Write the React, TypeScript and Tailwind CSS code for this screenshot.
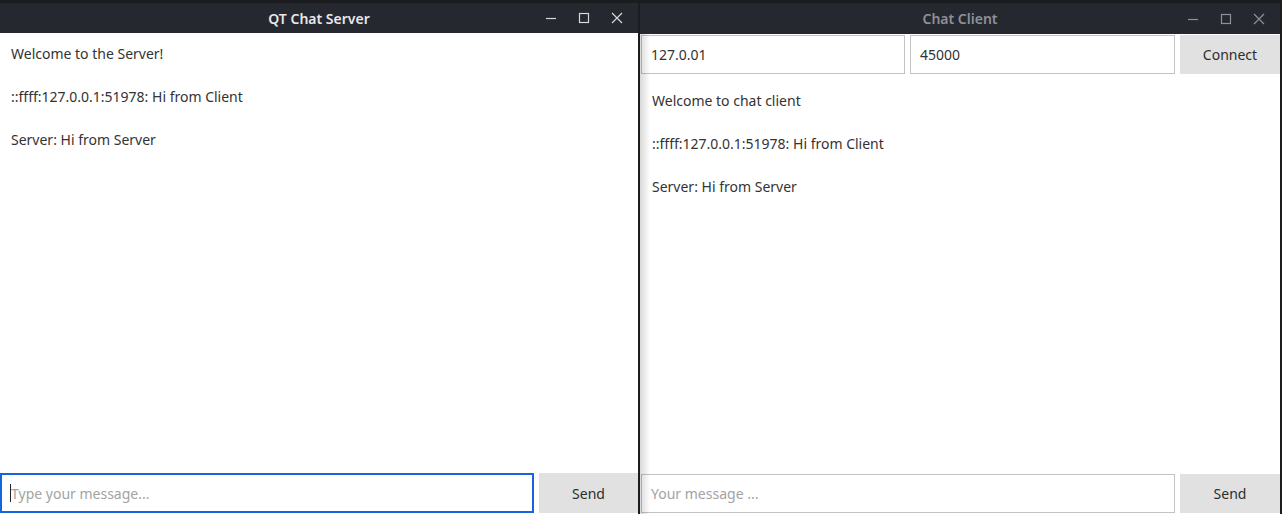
import React from "react";

const font = { fontFamily: '"Noto Sans", "Open Sans", sans-serif' };

function Controls({ dim }: { dim?: boolean }) {
  const c = dim ? "#8d9097" : "#d6d7da";
  return (
    <div className="flex items-center gap-[19px] pr-[14px]">
      <svg width="14" height="14" viewBox="0 0 14 14">
        <line x1="2" y1="7.5" x2="12" y2="7.5" stroke={c} strokeWidth="1.2" />
      </svg>
      <svg width="14" height="14" viewBox="0 0 14 14">
        <rect x="2.5" y="2.5" width="9" height="9" fill="none" stroke={c} strokeWidth="1.2" />
      </svg>
      <svg width="14" height="14" viewBox="0 0 14 14">
        <path d="M2 2 L12 12 M12 2 L2 12" stroke={c} strokeWidth="1.2" />
      </svg>
    </div>
  );
}

function TitleBar({ title, dim, h }: { title: string; dim?: boolean; h: string }) {
  return (
    <div className={`relative flex items-center justify-end bg-[#262830] ${h}`}>
      <div
        className={`absolute inset-0 flex items-center justify-center text-[14px] font-semibold ${
          dim ? "text-[#8d9097]" : "text-[#e6e7ea]"
        }`}
      >
        {title}
      </div>
      <div className="relative">
        <Controls dim={dim} />
      </div>
    </div>
  );
}

export default function App() {
  return (
    <div
      className="w-[1282px] h-[514px] bg-[#1b1c20] pt-[3px] flex overflow-hidden text-[14px] text-[#333333]"
      style={font}
    >
      {/* Server window */}
      <div className="w-[638px] flex flex-col">
        <TitleBar title="QT Chat Server" h="h-[30px]" />
        <div className="flex-1 bg-white flex flex-col">
          <div className="flex-1 flex flex-col gap-[23px] pt-[11px] pl-[11px] leading-[20px]">
            <div>Welcome to the Server!</div>
            <div>::ffff:127.0.0.1:51978: Hi from Client</div>
            <div>Server: Hi from Server</div>
          </div>
          <div className="flex gap-[5px] h-[41px] pb-[1px]">
            <div className="w-[534px] border-2 border-[#1565e0] flex items-center pl-[8px]">
              <div className="w-[1px] h-[18px] bg-[#222]" />
              <span className="text-[#a3a3a3] ml-0">Type your message...</span>
            </div>
            <div className="flex-1 bg-[#e1e1e1] flex items-center justify-center text-[#2d2d2d]">
              Send
            </div>
          </div>
        </div>
      </div>

      {/* Client window */}
      <div className="ml-[2px] w-[640px] flex flex-col">
        <TitleBar title="Chat Client" dim h="h-[31px]" />
        <div className="relative flex-1 bg-white flex flex-col">
          <div className="flex gap-[5px] mt-[1px] h-[39px] pl-[1px]">
            <div className="w-[264px] border border-[#c3c3c3] flex items-center pl-[9px]">127.0.01</div>
            <div className="w-[265px] border border-[#c3c3c3] flex items-center pl-[9px]">45000</div>
            <div className="flex-1 bg-[#e1e1e1] flex items-center justify-center text-[#2d2d2d]">
              Connect
            </div>
          </div>
          <div className="flex-1 flex flex-col gap-[23px] pt-[17px] pl-[12px] leading-[20px]">
            <div>Welcome to chat client</div>
            <div>::ffff:127.0.0.1:51978: Hi from Client</div>
            <div>Server: Hi from Server</div>
          </div>
          <div className="flex gap-[5px] h-[40px] pl-[1px] pb-[1px]">
            <div className="w-[534px] border border-[#c3c3c3] flex items-center pl-[9px] text-[#a3a3a3]">
              Your message ...
            </div>
            <div className="flex-1 bg-[#e1e1e1] flex items-center justify-center text-[#2d2d2d]">
              Send
            </div>
          </div>
          <div className="pointer-events-none absolute left-0 top-0 bottom-0 w-[10px] bg-gradient-to-r from-black/15 to-transparent" />
        </div>
      </div>
    </div>
  );
}
